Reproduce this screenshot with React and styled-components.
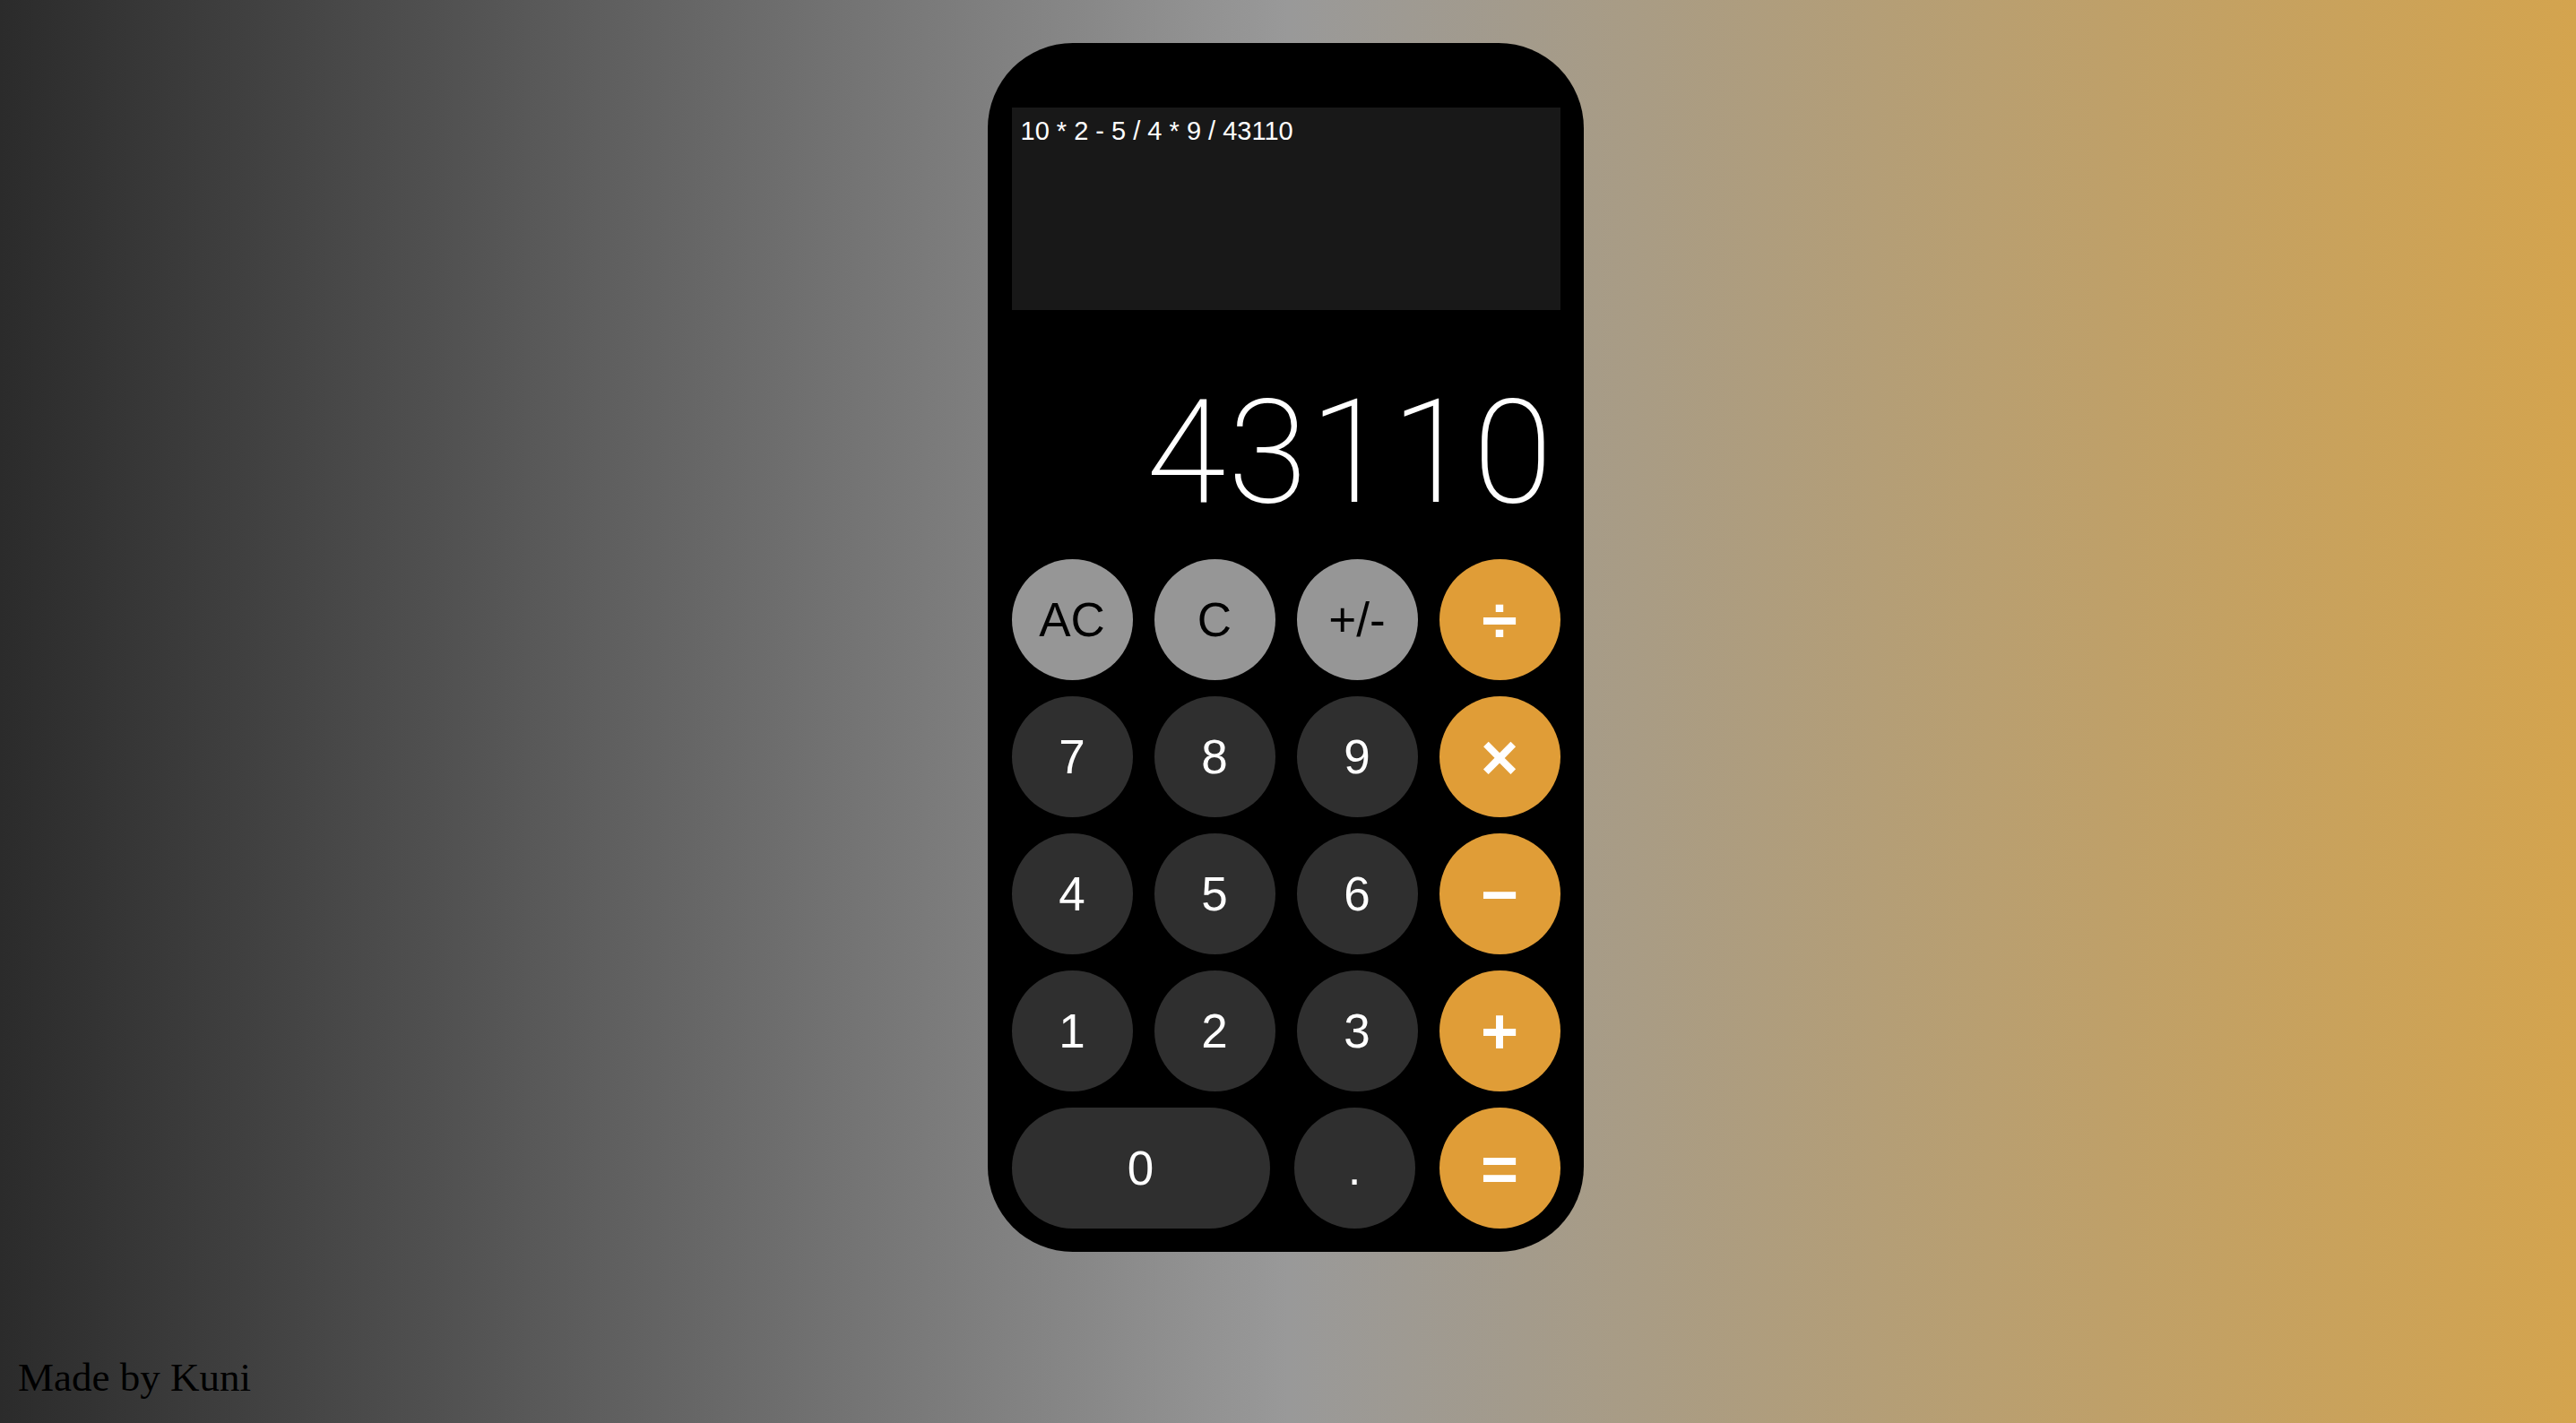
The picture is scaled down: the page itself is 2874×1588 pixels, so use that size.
import React from "react";
import styled, { createGlobalStyle } from "styled-components";

const GlobalStyle = createGlobalStyle`
  html, body {
    margin: 0;
    padding: 0;
    height: 100%;
  }
  body {
    background: linear-gradient(to right, #2b2b2b 0%, #999999 50%, #d4a44e 100%);
    font-family: "Liberation Serif", "Times New Roman", serif;
  }
  #root {
    min-height: 100%;
  }
`;

const Page = styled.div`
  min-height: 100vh;
  box-sizing: border-box;
  display: flex;
  flex-direction: column;
  padding-top: 48px;
`;

const Calculator = styled.div`
  align-self: center;
  margin-right: 6px;
  box-sizing: border-box;
  width: 665px;
  height: 1349px;
  background: #000;
  border-radius: 95px;
  padding: 72px 26px 26px 27px;
  display: flex;
  flex-direction: column;
`;

const History = styled.div`
  box-sizing: border-box;
  height: 226px;
  background: #181818;
  padding: 10px 10px;
  color: #fff;
  font-family: "Liberation Sans", Arial, sans-serif;
  font-size: 29px;
  line-height: normal;
`;

const Result = styled.div`
  flex: 1;
  display: flex;
  align-items: flex-end;
  justify-content: flex-end;
  padding: 0 6px 38px 0;
  color: #fff;
  font-family: Roboto, "Liberation Sans", sans-serif;
  font-weight: 200;
  font-size: 161px;
  letter-spacing: 2.5px;
  line-height: 1;
`;

const Keypad = styled.div`
  display: flex;
  flex-direction: column;
  gap: 18px;
`;

const KeyRow = styled.div`
  display: flex;
  justify-content: space-between;
`;

const palette = {
  func: { bg: "#969696", fg: "#000" },
  num: { bg: "#2f2f2f", fg: "#fff" },
  op: { bg: "#e09d37", fg: "#fff" },
};

const Key = styled.button`
  box-sizing: border-box;
  width: ${(p) => (p.$wide ? "288px" : "135px")};
  height: 135px;
  border: none;
  border-radius: 68px;
  padding: 0;
  margin: 0;
  display: flex;
  align-items: center;
  justify-content: center;
  background: ${(p) => palette[p.$kind].bg};
  color: ${(p) => palette[p.$kind].fg};
  font-family: "Liberation Sans", Arial, sans-serif;
  font-size: ${(p) => (p.$kind === "op" ? "72px" : "53px")};
  font-weight: ${(p) => (p.$kind === "op" ? 700 : 400)};
  line-height: 1;
  cursor: pointer;
`;

const Footer = styled.div`
  margin-top: auto;
  padding: 0 0 25px 20px;
  font-family: "Liberation Serif", "Times New Roman", serif;
  font-size: 45px;
  color: #000;
`;

const rows = [
  [
    { label: "AC", kind: "func" },
    { label: "C", kind: "func" },
    { label: "+/-", kind: "func" },
    { label: "÷", kind: "op" },
  ],
  [
    { label: "7", kind: "num" },
    { label: "8", kind: "num" },
    { label: "9", kind: "num" },
    { label: "×", kind: "op" },
  ],
  [
    { label: "4", kind: "num" },
    { label: "5", kind: "num" },
    { label: "6", kind: "num" },
    { label: "−", kind: "op" },
  ],
  [
    { label: "1", kind: "num" },
    { label: "2", kind: "num" },
    { label: "3", kind: "num" },
    { label: "+", kind: "op" },
  ],
  [
    { label: "0", kind: "num", wide: true },
    { label: ".", kind: "num" },
    { label: "=", kind: "op" },
  ],
];

export default function App() {
  return (
    <>
      <GlobalStyle />
      <Page>
        <Calculator>
          <History>10 * 2 - 5 / 4 * 9 / 43110</History>
          <Result>43110</Result>
          <Keypad>
            {rows.map((row, i) => (
              <KeyRow key={i}>
                {row.map((k) => (
                  <Key key={k.label} $kind={k.kind} $wide={k.wide}>
                    {k.label}
                  </Key>
                ))}
              </KeyRow>
            ))}
          </Keypad>
        </Calculator>
        <Footer>Made by Kuni</Footer>
      </Page>
    </>
  );
}
